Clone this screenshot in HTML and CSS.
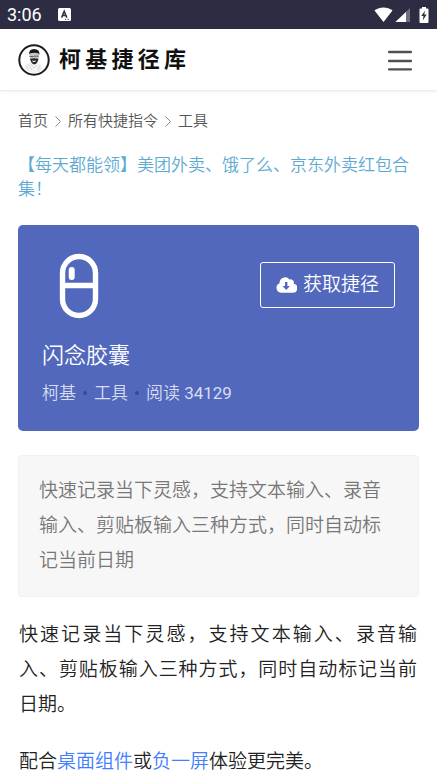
FILE: index.html
```html
<!DOCTYPE html>
<html lang="zh-CN">
<head>
<meta charset="utf-8">
<meta name="viewport" content="width=device-width, initial-scale=1">
<title>闪念胶囊 - 柯基捷径库</title>
<link rel="stylesheet" href="styles.css">
</head>
<body>
<div class="status">
  <span class="clock">3:06</span>
  <svg class="status-app" width="13" height="13" viewBox="0 0 13 13" aria-hidden="true">
    <rect width="13" height="13" rx="1.5" fill="#fff"/>
    <path d="M3.6 9.6 6.2 3.2 8.8 9.6M4.5 7.6h3.4" fill="none" stroke="#2c2d42" stroke-width="1.5"/>
    <path d="M7 11.3h1.2M9.6 11.3h1.2" stroke="#2c2d42"/>
  </svg>
  <svg class="status-icons" width="56" height="18" viewBox="0 0 56 18" aria-hidden="true">
    <path d="M0.5 4.6C5.500 .3 13.500 .3 18.500 4.600L9.500 16z" fill="#fff"/>
    <path d="M36 2v14H21z" fill="#6c6d7e"/>
    <path d="M32 6v10H21.500z" fill="#fff"/>
    <path d="M48 1h4v1.500h1.500q1 0 1 1V16q0 1-1 1h-7q-1 0-1-1V3.500q0-1 1-1H48z" fill="#fff"/>
    <path d="M51.200 4.500 47.200 10h2.300l-.8 4.500 4-6h-2.500z" fill="#2c2d42"/>
  </svg>
</div>
<header class="header">
  <a class="brand" href="#">
    <svg width="32" height="32" viewBox="0 0 32 32" aria-hidden="true">
      <circle cx="16" cy="16" r="14.700" fill="#fff" stroke="#1c1c1c" stroke-width="2"/>
      <path d="M6 25q1-6 7-7l3 4 4-3q4 1 5 6-4 4-9 4t-10-4z" fill="#f3f3f3"/>
      <path d="M7 21q2 1 3 5M13 20l3 4 3-3M22 21q-2 3-1 7M10 20l4 6" fill="none" stroke="#d4d4d4" stroke-width=".8"/>
      <path d="M11.500 10q1-3 5-3t4.500 4l-.6 5q-1.400 4-4.400 4-2 0-3.500-3z" fill="#c4c4c4"/>
      <path d="M11.200 10.500Q10.500 5.200 16 5q6 .2 5.400 6l-1.200-1.800q-4-1-8 0z" fill="#181818"/>
      <path d="M12 14.800q4-1 8.400 0-.9 5.600-4.200 5.600-2.700 0-4.200-5.600z" fill="#2a2a2a"/>
      <path d="M14 16.500q2 .8 4 0-.5 1.500-2 1.500t-2-1.500z" fill="#fff"/>
      <path d="M11.500 12.500h4l1-.3h4" fill="none" stroke="#555" stroke-width=".9"/>
    </svg>
    <span class="brand-name">柯基捷径库</span>
  </a>
  <button class="menu" type="button" aria-label="菜单">
    <svg width="26" height="22" viewBox="0 0 26 22" aria-hidden="true">
      <path d="M2 3h22M2 12h22M2 20.300h22" stroke="#505050" stroke-width="2.300" stroke-linecap="round"/>
    </svg>
  </button>
</header>
<main class="page">
  <nav class="crumbs">
    <a href="#">首页</a>
    <svg width="8" height="12" viewBox="0 0 8 12" aria-hidden="true"><path d="M1.500 1.500 6.500 6.500l-5 5" fill="none" stroke="#888"/></svg>
    <a href="#">所有快捷指令</a>
    <svg width="8" height="12" viewBox="0 0 8 12" aria-hidden="true"><path d="M1.500 1.500 6.500 6.500l-5 5" fill="none" stroke="#888"/></svg>
    <a href="#">工具</a>
  </nav>
  <a class="promo" href="#">【每天都能领】美团外卖、饿了么、京东外卖红包合集！</a>
  <section class="card">
    <div class="card-top">
      <svg width="72" height="72" viewBox="0 0 72 72" aria-hidden="true">
        <rect x="20.500" y="7.500" width="33" height="59" rx="16.500" fill="none" stroke="#fff" stroke-width="5.400"/>
        <path d="M21 36.500h33" stroke="#fff" stroke-width="5.600"/>
        <path d="M29.700 21v7" stroke="#fff" stroke-width="6" stroke-linecap="round"/>
      </svg>
      <button class="get" type="button">
        <svg width="21" height="16" viewBox="0 0 21 16" aria-hidden="true">
          <path d="M5 15.800A5 5 0 0 1 3.600 6.200 5.500 5.500 0 0 1 13.500 2.500 3.300 3.300 0 0 1 17.700 6.700 4.600 4.600 0 0 1 16.500 15.800z" fill="#fff"/>
          <path d="M9 5h2.400v4h2.500l-3.700 4-3.700-4H9z" fill="#5168bd"/>
        </svg>
        <span>获取捷径</span>
      </button>
    </div>
    <h1 class="title">闪念胶囊</h1>
    <div class="meta"><span>柯基</span><i class="dot"></i><span>工具</span><i class="dot"></i><span>阅读 <b class="count">34129</b></span></div>
  </section>
  <blockquote class="summary">快速记录当下灵感，支持文本输入、录音输入、剪贴板输入三种方式，同时自动标记当前日期</blockquote>
  <article class="article">
    <p>快速记录当下灵感，支持文本输入、录音输入、剪贴板输入三种方式，同时自动标记当前日期。</p>
    <p>配合<a href="#">桌面组件</a>或<a href="#">负一屏</a>体验更完美。</p>
  </article>
</main>
</body>
</html>
```
FILE: styles.css
```css
* {
  box-sizing: border-box;
}

html {
  scrollbar-width: none;
}

body {
  margin: 0;
  background: #fff;
  color: #222;
  font-family: Roboto, "Noto Sans CJK SC", sans-serif;
  font-weight: 350;
}

a {
  text-decoration: none;
}

svg {
  display: block;
  flex: none;
}

button {
  font: inherit;
  cursor: pointer;
}

.status {
  display: flex;
  align-items: center;
  gap: 16px;
  height: 29px;
  padding: 0 7px;
  background: #2c2d42;
  color: #fff;
  font-weight: 400;
}

.clock {
  font-size: 18px;
  line-height: 29px;
}

.status-icons {
  margin-left: auto;
}

.header {
  display: flex;
  align-items: center;
  justify-content: space-between;
  height: 62px;
  padding: 0 24px 0 18px;
  border-bottom: 1px solid #eee;
  box-shadow: 0 1px 3px rgba(0, 0, 0, 0.06);
}

.brand {
  display: flex;
  align-items: center;
  gap: 9px;
  color: #111;
}

.brand-name {
  width: 127px;
  font-size: 22px;
  font-weight: 700;
  line-height: 32px;
  text-align: justify;
  text-align-last: justify;
}

.menu {
  padding: 0;
  border: 0;
  background: none;
}

.page {
  padding: 16px 18px 0;
}

.crumbs {
  display: flex;
  align-items: center;
  gap: 6px;
  font-size: 15px;
  line-height: 28px;
}

.crumbs a {
  color: #555;
}

.promo {
  display: block;
  margin-top: 18px;
  color: #5eaad2;
  font-size: 17px;
  line-height: 24px;
}

.card {
  margin-top: 24px;
  padding: 24px;
  border-radius: 5px;
  background: #5168bd;
  color: #fff;
}

.card-top {
  display: flex;
  align-items: center;
  justify-content: space-between;
}

.get {
  display: flex;
  align-items: center;
  gap: 6px;
  padding: 8px 15px;
  border: 1px solid #fff;
  border-radius: 3px;
  background: none;
  color: #fff;
  font-size: 19px;
  line-height: 28px;
}

.title {
  margin: 19px 0 7px;
  font-size: 22px;
  font-weight: 350;
  line-height: 32px;
}

.meta {
  display: flex;
  align-items: center;
  gap: 7px;
  color: #d8ddf1;
  font-size: 17px;
  line-height: 28px;
}

.count {
  font-weight: 400;
}

.dot {
  width: 4px;
  height: 4px;
  border-radius: 50%;
  background: #3c4c85;
}

.summary {
  margin: 24px 0 20px;
  padding: 17px 20px 18px;
  border: 1px solid #f0f0f0;
  border-radius: 4px;
  background: #f7f7f7;
  color: #777;
  font-size: 19px;
  line-height: 35px;
}

.article {
  padding: 0 2px 0 1px;
  font-size: 19px;
  line-height: 35px;
  text-align: justify;
}

.article p {
  margin: 0 0 22px;
}

.article a {
  color: #427eff;
}
```
